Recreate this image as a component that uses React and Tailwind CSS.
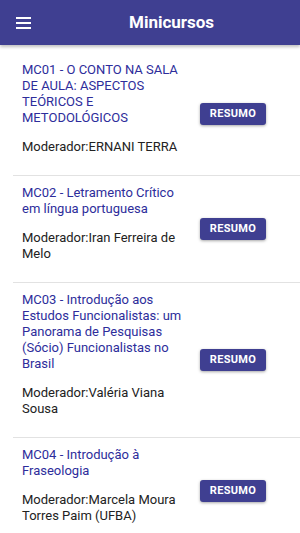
import React from "react";

const cursos = [
  {
    titulo: "MC01 - O CONTO NA SALA DE AULA: ASPECTOS TEÓRICOS E METODOLÓGICOS",
    moderador: "ERNANI TERRA",
  },
  {
    titulo: "MC02 - Letramento Crítico em língua portuguesa",
    moderador: "Iran Ferreira de Melo",
  },
  {
    titulo:
      "MC03 - Introdução aos Estudos Funcionalistas: um Panorama de Pesquisas (Sócio) Funcionalistas no Brasil",
    moderador: "Valéria Viana Sousa",
  },
  {
    titulo: "MC04 - Introdução à Fraseologia",
    moderador: "Marcela Moura Torres Paim (UFBA)",
  },
];

function Item({ curso }) {
  return (
    <div className="ml-[13px] flex items-center border-b border-[#e2e2e2]">
      <div className="w-[175px] pl-[9px] pt-[9px] pb-[20px]">
        <p className="text-[13px] leading-[16px] text-[#2d2d9b]">{curso.titulo}</p>
        <p className="mt-[13px] text-[13px] leading-[16px] text-[#222]">
          Moderador:{curso.moderador}
        </p>
      </div>
      <button className="ml-[12px] h-[22px] w-[66px] rounded-[3px] bg-[#3f3f91] text-[11px] font-bold tracking-[0.3px] text-white shadow-[0_1px_3px_rgba(0,0,0,0.35)]">
        RESUMO
      </button>
    </div>
  );
}

export default function App() {
  return (
    <div className="h-[533px] w-[300px] overflow-hidden bg-white font-['Roboto',sans-serif]">
      {/* toolbar */}
      <div className="relative z-10 flex h-[45px] items-center bg-[#3f3f91] shadow-[0_2px_3px_rgba(0,0,0,0.25)]">
        <div className="ml-[16px] flex w-[15px] flex-col gap-[3px]">
          <span className="h-[2px] bg-white" />
          <span className="h-[2px] bg-white" />
          <span className="h-[2px] bg-white" />
        </div>
        <h1 className="ml-[98px] text-[17px] font-bold text-white">Minicursos</h1>
      </div>

      <div className="pt-[8px]">
        {cursos.map((c, i) => (
          <Item key={i} curso={c} />
        ))}
      </div>
    </div>
  );
}
